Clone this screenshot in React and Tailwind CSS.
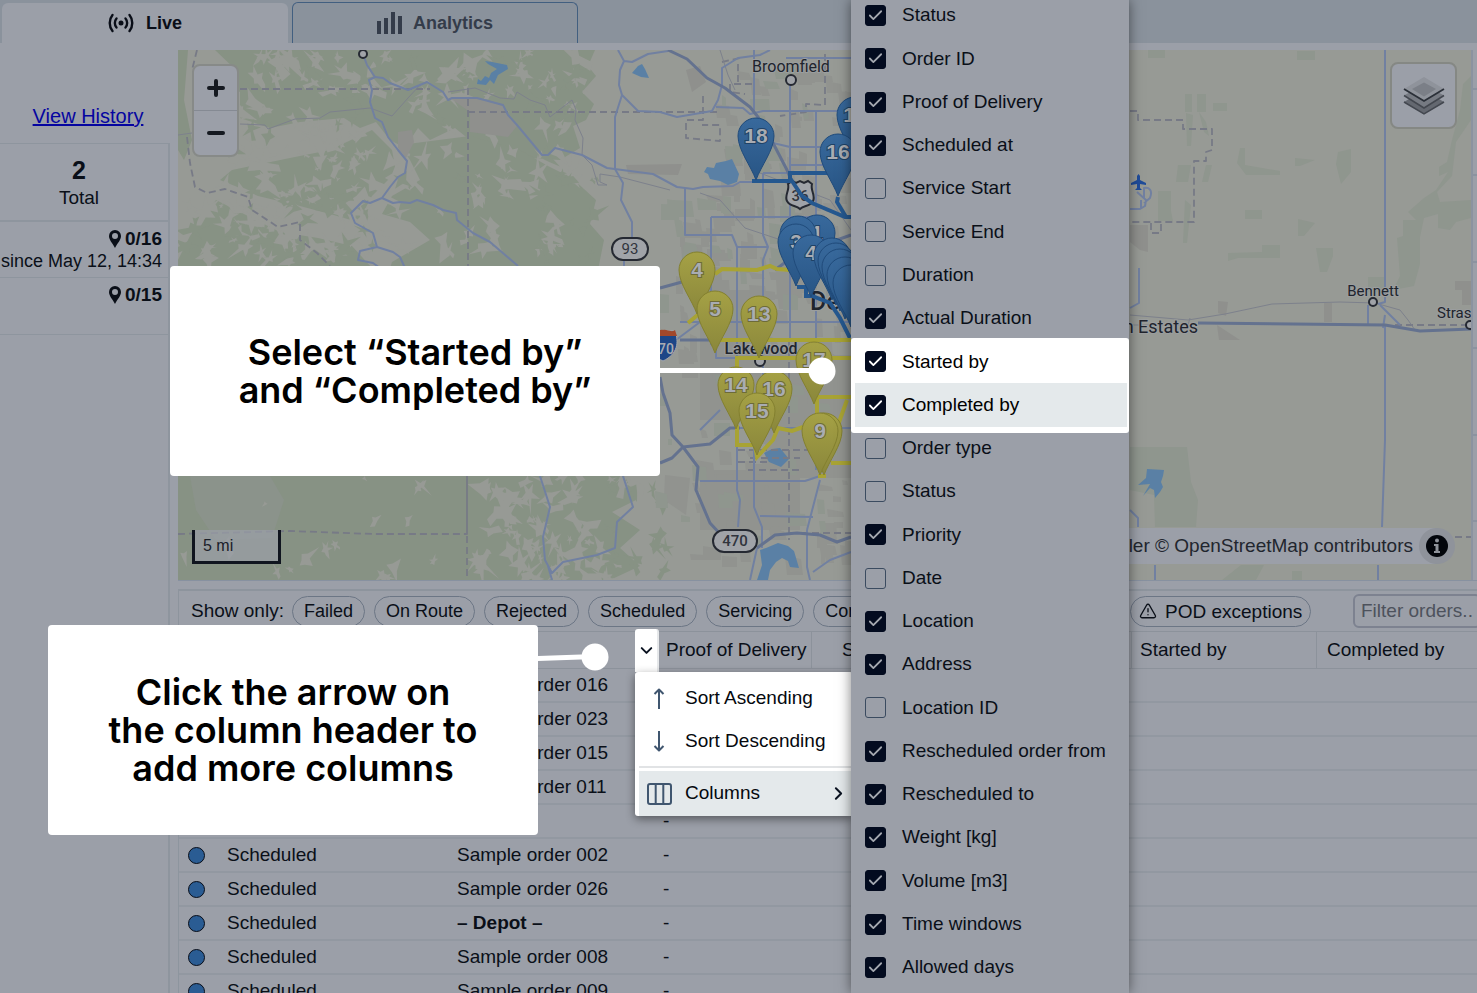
import React, { useState } from "react";
import { Check, ChevronDown, ChevronRight, TriangleAlert } from "lucide-react";

const COLUMN_OPTIONS = [
  { label: "Status", checked: true },
  { label: "Order ID", checked: true },
  { label: "Proof of Delivery", checked: true },
  { label: "Scheduled at", checked: true },
  { label: "Service Start", checked: false },
  { label: "Service End", checked: false },
  { label: "Duration", checked: false },
  { label: "Actual Duration", checked: true },
  { label: "Started by", checked: true, spotlight: true },
  { label: "Completed by", checked: true, spotlight: true, active: true },
  { label: "Order type", checked: false },
  { label: "Status", checked: false },
  { label: "Priority", checked: true },
  { label: "Date", checked: false },
  { label: "Location", checked: true },
  { label: "Address", checked: true },
  { label: "Location ID", checked: false },
  { label: "Rescheduled order from", checked: true },
  { label: "Rescheduled to", checked: true },
  { label: "Weight [kg]", checked: true },
  { label: "Volume [m3]", checked: true },
  { label: "Time windows", checked: true },
  { label: "Allowed days", checked: true },
];

const ORDERS = [
  "Sample order 016",
  "Sample order 023",
  "Sample order 015",
  "Sample order 011",
  "",
  "Sample order 002",
  "Sample order 026",
  "– Depot –",
  "Sample order 008",
  "Sample order 009",
];

const FILTERS = ["Failed", "On Route", "Rejected", "Scheduled", "Servicing", "Completed"];

const PINS = [
  { x: 697, y: 252, label: "4", color: "yellow" },
  { x: 715, y: 291, label: "5", color: "yellow" },
  { x: 759, y: 296, label: "13", color: "yellow" },
  { x: 814, y: 342, label: "17", color: "yellow" },
  { x: 736, y: 367, label: "14", color: "yellow" },
  { x: 774, y: 371, label: "16", color: "yellow" },
  { x: 757, y: 393, label: "15", color: "yellow" },
  { x: 824, y: 413, label: "", color: "yellow" },
  { x: 820, y: 413, label: "9", color: "yellow" },
  { x: 756, y: 118, label: "18", color: "blue" },
  { x: 855, y: 97, label: "17", color: "blue" },
  { x: 838, y: 134, label: "16", color: "blue" },
  { x: 817, y: 215, label: "1", color: "blue" },
  { x: 798, y: 216, label: "", color: "blue" },
  { x: 796, y: 224, label: "3", color: "blue" },
  { x: 811, y: 235, label: "4", color: "blue" },
  { x: 832, y: 238, label: "", color: "blue" },
  { x: 836, y: 243, label: "", color: "blue" },
  { x: 840, y: 249, label: "", color: "blue" },
  { x: 845, y: 257, label: "", color: "blue" },
  { x: 851, y: 265, label: "", color: "blue" },
];

// Small seeded generator so the terrain looks the same on every render
const seeded = (seed) => {
  let s = seed;
  return () => {
    s = (s * 16807) % 2147483647;
    return s / 2147483647;
  };
};

const shards = (seed, count, x, y, w, h, size) => {
  const rand = seeded(seed);
  let d = "";
  for (let i = 0; i < count; i++) {
    const cx = x + rand() * w;
    const cy = y + rand() * h;
    const r = size * (0.3 + rand() * 1.1);
    const points = 6 + Math.floor(rand() * 6);
    const tilt = rand() * Math.PI;
    for (let p = 0; p < points; p++) {
      const a = (p / points) * Math.PI * 2;
      // alternate long and short spokes for a jagged outline
      const rr = r * (p % 2 ? 0.2 + rand() * 0.4 : 0.7 + rand() * 0.8);
      const ex = Math.cos(a) * rr * 1.3;
      const ey = Math.sin(a) * rr * 0.8;
      const px = cx + ex * Math.cos(tilt) - ey * Math.sin(tilt);
      const py = cy + ex * Math.sin(tilt) + ey * Math.cos(tilt);
      d += `${p ? "L" : "M"}${px.toFixed(1)},${py.toFixed(1)}`;
    }
    d += "Z";
  }
  return d;
};

const blocks = (seed, count, x, y, w, h) => {
  const rand = seeded(seed);
  let d = "";
  for (let i = 0; i < count; i++) {
    const bx = x + rand() * w;
    const by = y + rand() * h;
    const bw = 4 + rand() * 16;
    const bh = 4 + rand() * 14;
    d += `M${bx.toFixed(0)},${by.toFixed(0)}l${bw.toFixed(0)},${(rand() * 3).toFixed(0)}l${(rand() * 3).toFixed(0)},${bh.toFixed(0)}h-${bw.toFixed(0)}Z`;
  }
  return d;
};

const Pin = ({ x, y, label, color }) => (
  <g transform={`translate(${x} ${y})`}>
    <path
      d="M0 62C-5 48-18 32-18 18A18 18 0 0 1 18 18C18 32 5 48 0 62Z"
      fill={color === "blue" ? "url(#pinBlue)" : "url(#pinYellow)"}
      stroke={color === "blue" ? "#204b7b" : "#83802f"}
      strokeWidth="1"
    />
    <text
      x="0"
      y="25"
      textAnchor="middle"
      fontSize="21"
      fontWeight="700"
      fontFamily="Liberation Sans, sans-serif"
      fill="#a9acb2"
      stroke={color === "blue" ? "#1f4266" : "#6d6b38"}
      strokeWidth="2"
      paintOrder="stroke"
    >
      {label}
    </text>
  </g>
);

const Place = ({ x, y, size = 16, anchor = "middle", weight = 400, children }) => (
  <text
    x={x}
    y={y}
    textAnchor={anchor}
    fontSize={size}
    fontWeight={weight}
    fontFamily="Roboto, sans-serif"
    fill="#20242d"
    stroke="#9b9e9f"
    strokeWidth="2"
    paintOrder="stroke"
  >
    {children}
  </text>
);

const Terrain = () => (
  <>
    <rect x="178" y="50" width="1600" height="600" fill="#979a95" />
    <g fill="#879284">
      <path d="M215 50H595L588 66L596 76L582 92L594 104L586 120L573 126L580 148L560 160L528 158L500 146L470 140L455 128L430 140L418 128L405 148L390 140L376 122L360 128L344 118L300 122L270 128L240 118V92L224 84L236 70Z" />
      <path d="M400 145L470 136L520 150L548 166L572 178L596 200L590 224L604 240L598 270L560 300H380L392 262L430 240L410 222L382 214L392 196L420 180L410 160Z" />
      <path d="M232 170L290 158L330 150L372 130L392 150L396 172L372 196L358 222L330 214L300 206L258 196L240 188L220 180Z" />
      <path d="M190 236L216 200L248 216L280 232L318 238L352 246L372 268L350 290H178V260Z" />
      <path d="M178 50L188 50L184 100L192 140L184 160L178 150Z" />
      <path d="M178 470H622L636 500L612 512L640 530L620 548L640 566L610 580H178Z" />
    </g>
    <path d="M190 476H270L284 500L272 538L216 540L196 510Z" fill="#8b938b" />
    <g fill="#979a95">
      <path d={shards(41, 80, 225, 52, 365, 85, 9)} />
      <path d={shards(97, 80, 230, 140, 350, 120, 9)} />
      <path d={shards(131, 44, 225, 130, 170, 85, 8)} />
      <path d={shards(23, 34, 190, 205, 180, 60, 9)} />
      <path d={shards(59, 18, 184, 476, 280, 104, 7)} />
      <path d={shards(67, 70, 475, 476, 160, 104, 9)} />
    </g>
    <g fill="#879284">
      <path d={shards(11, 26, 225, 60, 370, 120, 8)} />
      <path d={shards(13, 26, 185, 190, 190, 80, 8)} />
      <path d={shards(17, 18, 540, 170, 60, 95, 7)} />
      <path d={shards(19, 14, 610, 485, 60, 90, 8)} />
    </g>
    <g fill="#8f908d">
      <path d="M450 98H478L502 106L517 126L508 137L470 132V112Z" />
      <path d="M398 132L412 130L414 142L406 158L398 148Z" />
      <path d="M626 165L682 164L678 175L628 174Z" />
      <path d="M686 70L700 66L706 82L692 92Z" />
    </g>
    <g fill="#91938f">
      <path d="M700 290H760V420H700ZM765 355H852V478H765ZM665 475L690 478L686 515L664 500ZM700 470H800V530H700Z" />
      <path d={blocks(31, 110, 672, 190, 170, 180)} />
      <path d={blocks(71, 45, 715, 60, 130, 130)} />
      <path d={blocks(83, 50, 690, 380, 155, 190)} />
    </g>
    <g fill="#8f968e">
      <path d={blocks(37, 30, 650, 180, 190, 130)} />
      <path d={blocks(43, 22, 655, 360, 180, 200)} />
      <path d={blocks(53, 16, 720, 55, 120, 110)} />
      <path d="M1148 50H1165V58H1148ZM1297 51H1315V60H1297ZM1185 94H1192V112H1185ZM1197 94H1206V112H1197ZM1213 103H1227V111H1213ZM1186 113L1193 115L1191 146H1187ZM1199 112L1206 122L1209 136L1204 132ZM1178 165H1191L1188 182H1176ZM1206 165H1212L1208 182H1202ZM1158 191H1171V211L1173 221H1158ZM1185 200L1191 205L1187 243H1183ZM1240 148H1245V165L1280 171V175H1246L1237 163ZM1295 158L1315 160L1300 166H1295ZM1338 152L1351 149V172L1341 184L1336 164ZM1245 210H1262V219H1245ZM1298 219L1315 223L1304 236H1298ZM1228 253L1262 252V245H1280V258H1238L1228 261ZM1316 248H1333V256L1327 272H1320ZM1368 277H1384V292H1368Z" />
      <path d="M1471 76L1463 84L1460 110L1452 140L1447 162L1439 167V176L1448 172L1436 190L1424 198L1408 212L1416 220L1403 220V236L1397 238L1400 276L1393 290L1414 286L1420 264L1420 237L1424 218L1438 214L1438 228L1450 230L1456 222L1471 218V200L1440 202L1437 192L1452 176L1456 142L1471 120Z" />
      <path d="M1130 447H1187L1191 482L1198 500L1196 527H1155L1154 495L1130 490ZM1241 565H1264L1256 580H1222ZM1292 571H1302V580H1292Z" />
    </g>
    <g fill="#8f908d">
      <path d="M1130 225H1148V252L1140 250L1130 242ZM1218 301L1228 302L1226 316L1218 313ZM1455 281H1471V305H1462V290H1455ZM1324 303H1332V322H1324ZM1217 325L1240 340H1219Z" />
    </g>
    <g fill="#5a80a5">
      <path d="M485 61L492 62L507 65L508 69L498 75L494 84L490 80L486 85L477 84L478 79L481 81L485 76L489 78L491 73L497 69L488 64Z" />
      <path d="M638 66L642 64L645 69L649 78L641 77L632 73Z" />
      <path d="M704 172L707 167L714 168L716 163L726 161L732 159L739 174L737 182L728 185L720 181L710 179L708 174Z" />
      <path d="M764 453L772 449L780 448L789 459L781 467L769 462Z" />
      <path d="M760 550L766 548L778 543L788 546L794 551L799 568L790 567L788 561L782 558L776 562L770 570L768 580H757L762 565Z" />
      <path d="M1147 469L1164 470L1163 476L1161 482L1163 487L1160 492L1155 498L1154 490L1150 488L1143 496L1150 484L1138 485L1146 478Z" />
    </g>
  </>
);

const Roads = () => (
  <g fill="none" strokeLinejoin="round">
    <g stroke="#777a86" strokeWidth="1.800" strokeDasharray="7 4">
      <path d="M240 89H430M468 88V268M468 112H720M197 50L192 70M187 137L190 163L195 187L207 193L225 189L248 197L252 210L278 227L300 222V240L317 253L330 266" />
      <path d="M178 534L290 531L373 534H467V476V580" />
      <path d="M703 96V120H686V138L720 141V125H702M722 62L740 58M738 64V82M825 54V105L806 104V112L780 116M752 84H730V92L745 94" />
      <path d="M1130 111L1138 111V120L1183 120V129H1212V150L1206 152V161H1194V222H1130M1151 223V233H1161V223M1395 325H1471" />
      <path d="M789 340V540M738 450H820M750 458H800M748 470H800M738 462H770M790 533H851M1455 537H1471" />
    </g>
    <g stroke="#7d818c" strokeWidth="1">
      <path d="M178 135L192 133M240 124L265 125L268 129L295 119L320 118L330 112L370 108L392 116L408 98L420 85M448 92L475 88L500 98L514 99L517 92L530 100L545 105L550 117L572 100L576 110L575 120L583 138L582 155L592 165L598 185H607L600 182V174L620 177L670 190M700 193L720 200L745 228L790 243L830 250M1130 315L1188 320L1225 314L1272 304L1340 302L1375 303L1400 310L1408 320L1415 330M1130 325H1188L1190 318M720 50L728 75L735 90M760 173L830 200L851 230" />
    </g>
    <g stroke="#7180a1" strokeWidth="2">
      <path d="M363 54L367 65L375 77L369 80L372 90L370 102L375 118L382 122L388 137L398 150L407 161L405 173L398 177L390 187L382 198L370 203L363 201L351 213L355 223L373 233L377 247L360 251L358 260L373 263L380 268M377 247L393 252L400 257L405 268" />
      <path d="M375 77L383 78L390 83L408 90L427 82L443 92L448 100L452 98L477 98L503 105L508 115L517 125L542 155H548L555 148L582 155L607 168L653 174L677 187L693 189L703 187L733 186L740 182H763" />
      <path d="M382 198L393 203L400 202L410 203L417 200L433 205L443 210L456 213L457 220L473 233L490 242L518 266" />
      <path d="M618 50L624 61L620 70L619 85L622 95L615 117V169L623 183L621 200L632 222V240M624 258V275M624 61L632 62L648 54L668 51M622 95L638 111L660 112L677 117L712 111L718 100L722 85V68L738 58L760 55L770 50" />
      <path d="M716 107L743 108L750 114L763 111H851M754 50V111M786 58H851M790 85V340M763 173V235L768 247L763 260V340M816 112V217M711 217V345M685 188V235H732L737 247H767M711 217H816M737 247V490L740 500L738 527M773 143L790 147H820M763 173H790M680 322H851M716 340V358H740M763 365V395M660 352L700 322M754 447V507L762 527V548M700 481H805L820 476M760 516L813 517M807 530V567L810 580M820 480L807 530M757 548L750 580M813 572L830 560L851 552M737 428H780L851 428M816 300V470M700 430L720 410M790 165H850" />
      <path d="M540 476L550 507L543 537L545 560L552 573L563 562L597 555L615 548L617 522L633 507L623 476M552 580L548 566" />
      <path d="M1385 50V302L1378 304M1385 325V440L1382 527M1378 565V580M1368 305V324M1380 305L1400 325M1385 315L1383 328M1155 565V580M1130 510L1138 518V527M1139 268V303L1130 308" />
      <path d="M1130 209H1140L1145 206L1146 200L1137 192M1141 208V200M1144 203L1150 198C1153 190 1149 187 1144 188V198" />
    </g>
    <g stroke="#64728f" strokeWidth="3">
      <path d="M668 50L687 59L707 78L725 88L750 107L758 117L773 143L787 170L795 190" />
      <path d="M660 377L663 393L670 413L672 435L683 447L698 467L696 490L710 523L722 536M660 463L672 458L683 447L710 444L730 428L740 428M660 288L682 282M757 548L775 535L797 533L820 535L837 542L851 537M680 340H715M775 270L795 255L851 235" />
      <path d="M1198 323L1385 325L1420 331L1471 329" />
    </g>
  </g>
);

const Routes = () => (
  <g fill="none" strokeLinejoin="miter">
    <g stroke="#25588f" strokeWidth="4">
      <path d="M752 181H790V173H835M790 178L802 196L812 203L845 217H853M838 197L837 202L846 217" />
      <path d="M797 287H806V296H812L830 303L840 318L850 338" />
    </g>
    <g stroke="#a8a334" strokeWidth="4">
      <path d="M715 274L722 269L757 270L770 266L777 269L790 270M688 323L700 313M715 340H851M737 370V358H851M737 425V445H755L757 457L773 440L778 428L792 431L803 427M851 397H817V415M847 400L838 425M831 463H851M818 476H826" />
    </g>
  </g>
);

const MapCanvas = () => (
  <svg
    className="absolute inset-0 h-full w-full"
    viewBox="178 50 1293 530"
    preserveAspectRatio="xMinYMin slice"
    aria-hidden="true"
  >
    <defs>
      <linearGradient id="pinBlue" x1="0" y1="0" x2="0" y2="1">
        <stop offset="0" stopColor="#38699c" />
        <stop offset="1" stopColor="#285585" />
      </linearGradient>
      <linearGradient id="pinYellow" x1="0" y1="0" x2="0" y2="1">
        <stop offset="0" stopColor="#a5a145" />
        <stop offset="1" stopColor="#8a873b" />
      </linearGradient>
    </defs>
    <Terrain />
    <Roads />

    <g fill="#a0a3a8" stroke="#252932" strokeWidth="2">
      <circle cx="363" cy="54" r="4" />
      <circle cx="791" cy="80" r="5" />
      <circle cx="1373" cy="302" r="4" />
      <circle cx="1470" cy="325" r="4" />
      <circle cx="760" cy="361" r="5" />
      <rect x="612" y="238" width="36" height="22" rx="11" />
      <rect x="713" y="530" width="44" height="22" rx="11" />
      <path d="M788 184L792 181L796 183L800 181L804 183L808 181L812 184C810 190 816 196 813 201C810 207 804 205 800 209C796 205 790 207 787 201C784 196 790 190 788 184Z" />
    </g>
    <g fontFamily="Roboto, sans-serif" fontSize="15" fill="#30343d" textAnchor="middle">
      <text x="630" y="254">93</text>
      <text x="735" y="546" fontWeight="500">470</text>
      <text x="800" y="201" fontWeight="500">36</text>
    </g>
    <path d="M651 331H675C679 342 678 354 663 361C648 354 647 342 651 331Z" fill="#1d4687" stroke="#a4a7ad" strokeWidth="1" />
    <path d="M651 331C656 333 660 329 663 330C667 329 671 333 675 330L677 336H649Z" fill="#a2482b" />
    <text x="666" y="354" fontFamily="Roboto, sans-serif" fontSize="14" fontWeight="500" fill="#a9acb2" textAnchor="middle">70</text>

    <Place x="791" y="72">Broomfield</Place>
    <Place x="761" y="354" weight={500}>Lakewood</Place>
    <Place x="1373" y="296" size={15}>Bennett</Place>
    <Place x="1437" y="318" size={15} anchor="start">Strasburg</Place>
    <Place x="1198" y="333" size={18} anchor="end">Dennison Estates</Place>
    <Place x="810" y="310" size={25} anchor="start" weight={500}>Denver</Place>
    <path d="M1138.500 174L1140 176V180L1146 183V185L1140 184V188L1142 190H1135L1137 188V184L1131 185V183L1137 180V176Z" fill="#1f4c9a" />

    <Routes />
    {PINS.map((pin) => (
      <Pin key={`${pin.x}-${pin.y}`} {...pin} />
    ))}
  </svg>
);

const LiveIcon = () => (
  <svg width="26" height="20" viewBox="0 0 26 20" fill="none" stroke="currentColor" strokeWidth="2.400" strokeLinecap="round">
    <path d="M4.500 2C0.800 6.500 0.800 13.500 4.500 18M21.500 2C25.200 6.500 25.200 13.500 21.500 18M8.500 5.500C6.300 8 6.300 12 8.500 14.500M17.500 5.500C19.700 8 19.700 12 17.500 14.500" />
    <circle cx="13" cy="10" r="2.500" fill="currentColor" stroke="none" />
  </svg>
);

const BarsIcon = () => (
  <svg width="26" height="22" viewBox="0 0 26 22" fill="currentColor">
    <rect x="0" y="9" width="4" height="13" />
    <rect x="7" y="6" width="4" height="16" />
    <rect x="14" y="0" width="4" height="22" />
    <rect x="21" y="4" width="4" height="18" />
  </svg>
);

const StopIcon = () => (
  <svg width="12" height="18" viewBox="0 0 12 18" fill="currentColor">
    <path fillRule="evenodd" d="M6 0A6 6 0 0 1 12 6C12 10 8.500 13 6 18C3.500 13 0 10 0 6A6 6 0 0 1 6 0ZM6 3A3 3 0 1 0 6 9A3 3 0 1 0 6 3Z" />
  </svg>
);

const LayersIcon = () => (
  <svg width="42" height="40" viewBox="0 0 42 40">
    <path d="M1 26L21 14L41 26L21 38Z" fill="#646870" />
    <path d="M1 26L21 38L41 26" fill="none" stroke="#43474f" strokeWidth="1.500" />
    <path d="M1 19.500L21 8L41 19.500L21 32Z" fill="#767a82" />
    <path d="M1 19.500L21 32L41 19.500" fill="none" stroke="#43474f" strokeWidth="1.500" />
    <path d="M1 13L21 1L41 13L21 25Z" fill="#8f939b" />
    <path d="M9 13L21 6.500L33 13L21 20.500Z" fill="#7b7f87" />
    <path d="M1 13L21 25L41 13" fill="none" stroke="#2b3038" strokeWidth="1.800" />
  </svg>
);

const SortArrow = ({ down = false }) => (
  <svg
    width="12"
    height="21"
    viewBox="0 0 12 21"
    fill="none"
    stroke="#40566f"
    strokeWidth="2"
    strokeLinejoin="round"
    className={down ? "rotate-180" : ""}
  >
    <path d="M6 21V1.500M1.500 6L6 1.500L10.500 6" />
  </svg>
);

const ColumnsIcon = () => (
  <svg width="25" height="22" viewBox="0 0 25 22" fill="none" stroke="#40566f" strokeWidth="2">
    <rect x="1" y="1" width="23" height="20" rx="2" />
    <path d="M8.700 1V21M16.300 1V21" />
  </svg>
);

const Header = () => (
  <header className="flex h-[43px] shrink-0 items-end gap-1 bg-[#8a929c] pl-0.5">
    <button className="flex h-10 w-[286px] items-center justify-center gap-3 rounded-t-md bg-[#9b9fa8] text-[18px] font-bold text-[#0a0e18]">
      <LiveIcon />
      Live
    </button>
    <button className="flex h-[41px] w-[286px] items-center justify-center gap-2.5 rounded-t-md border border-b-0 border-[#425f80] text-[18px] font-bold text-[#343c4a]">
      <BarsIcon />
      Analytics
    </button>
  </header>
);

const Sidebar = () => (
  <aside className="w-[170px] shrink-0 overflow-hidden">
    <div className="flex h-[100px] items-end justify-center pb-3 pl-1.5">
      <a href="#history" className="text-[20px] text-[#0505a0] underline">
        View History
      </a>
    </div>
    <div className="h-full border-t border-r-2 border-[#8e959e]">
      <div className="flex h-[78px] flex-col items-center justify-center border-b-2 border-[#8e959e] pt-1 pr-2.5">
        <span className="text-[25px] leading-7 font-bold">2</span>
        <span className="text-[19px] leading-7">Total</span>
      </div>
      <div className="flex h-14 flex-col items-end border-b border-[#8e959e] pt-1.5 pr-1.5">
        <div className="flex items-center gap-1 text-[19px] leading-[22px] font-bold">
          <StopIcon />
          0/16
        </div>
        <div className="text-[18px] leading-[22px] whitespace-nowrap">since May 12, 14:34</div>
      </div>
      <div className="flex h-[57px] flex-col items-end border-b border-[#8e959e] pt-1.5 pr-1.5">
        <div className="flex items-center gap-1 text-[19px] leading-[22px] font-bold">
          <StopIcon />
          0/15
        </div>
      </div>
    </div>
  </aside>
);

const MapPanel = () => (
  <section className="flex h-[531px] border-b border-[#8791a0]">
    <div className="relative flex-1 overflow-hidden">
      <MapCanvas />

      <div className="absolute top-3.5 left-3.5 flex w-[47px] flex-col rounded-lg border-2 border-[#878a88] bg-[#9b9fa8]">
        <button aria-label="Zoom in" className="flex h-[45px] items-center justify-center border-b border-[#858a93]">
          <svg width="18" height="18" viewBox="0 0 18 18" stroke="#151920" strokeWidth="4" strokeLinecap="round">
            <path d="M2 9H16M9 2V16" />
          </svg>
        </button>
        <button aria-label="Zoom out" className="flex h-11 items-center justify-center">
          <svg width="18" height="18" viewBox="0 0 18 18" stroke="#151920" strokeWidth="4" strokeLinecap="round">
            <path d="M2 9H16" />
          </svg>
        </button>
      </div>

      <button
        aria-label="Layers"
        className="absolute top-3 right-3.5 flex h-[67px] w-[67px] items-center justify-center rounded-lg border-2 border-[#858884] bg-[#9b9fa8]"
      >
        <LayersIcon />
      </button>

      <div className="absolute bottom-4 left-3.5 flex h-[34px] w-[89px] items-center border-3 border-t-0 border-[#10151f] bg-[#9b9fa8]/70 pl-2 text-[16px] text-[#1b2029]">
        5 mi
      </div>

      <div className="absolute right-4 bottom-4 flex h-9 items-center gap-1.5">
        <div className="absolute inset-y-0 right-5 left-0 bg-[#9b9fa8]" />
        <span className="relative text-[19px] whitespace-nowrap text-[#22262e]">
          © MapTiler © OpenStreetMap contributors
        </span>
        <button aria-label="Attribution" className="relative flex h-9 w-9 items-center justify-center rounded-full bg-[#8f939b]">
          <svg width="22" height="22" viewBox="0 0 22 22">
            <circle cx="11" cy="11" r="11" fill="#03060c" />
            <circle cx="11" cy="5.500" r="2" fill="#8f939b" />
            <path d="M8 9H12.500V16H14V18H8V16H9.500V11H8Z" fill="#8f939b" />
          </svg>
        </button>
      </div>
    </div>
    <div className="flex w-1.5 flex-col border-l-2 border-[#8b93a0]">
      <div className="h-10 border-b-2 border-[#8b93a0]" />
      <div className="flex-1 border-b-2 border-[#8b93a0]" />
      <div className="flex-1 border-b-2 border-[#8b93a0]" />
      <div className="flex-1 border-b-2 border-[#8b93a0]" />
      <div className="flex-1 border-b-2 border-[#8b93a0]" />
      <div className="flex-1 border-b-2 border-[#8b93a0]" />
      <div className="h-[58px]" />
    </div>
  </section>
);

const FilterBar = () => (
  <div className="flex h-[42px] items-center overflow-hidden border-t-2 border-l border-[#8d949d] pl-3">
    <span className="mr-2 shrink-0 text-[19px]">Show only:</span>
    <div className="flex shrink-0 gap-[9px]">
      {FILTERS.map((name) => (
        <button key={name} className="h-[31px] rounded-full border border-[#6c7685] px-[11px] text-[18px] leading-none">
          {name}
        </button>
      ))}
    </div>
    <div className="ml-auto flex w-[347px] shrink-0 items-center justify-between">
      <button className="flex h-[31px] items-center gap-2 rounded-full border border-[#6c7685] px-2 text-[19px] leading-none">
        <TriangleAlert size={18} strokeWidth={1.800} />
        POD exceptions
      </button>
      <input
        aria-label="Filter orders"
        placeholder="Filter orders..."
        className="-mr-1 h-[34px] w-[128px] rounded-md border-2 border-[#7d8290] px-1.5 text-[19px] placeholder:text-[#4d525c]"
      />
    </div>
  </div>
);

const OrdersTable = () => (
  <table className="w-full table-fixed border-separate border-spacing-0 border-l border-[#8d959e] text-left text-[19px]">
    <colgroup>
      <col className="w-10" />
      <col className="w-[230px]" />
      <col className="w-[210px]" />
      <col className="w-[153px]" />
      <col className="w-[320px]" />
      <col className="w-[185px]" />
      <col />
    </colgroup>
    <thead>
      <tr className="h-[38px] [&>th]:border-y [&>th]:border-[#8c929b]">
        <th />
        <th className="p-0 pl-2 font-normal">Status</th>
        <th className="relative p-0 pl-2 font-normal">
          Order ID
          <button
            aria-label="Column menu"
            className="absolute -top-[3px] right-0 flex h-[43px] w-6 items-center justify-center rounded-t-[3px] border-r-2 border-[#e6e8ea] bg-white"
          >
            <ChevronDown size={19} strokeWidth={2.500} className="text-[#0a1220]" />
          </button>
        </th>
        <th className="border-r p-0 pl-[7px] font-normal whitespace-nowrap">Proof of Delivery</th>
        <th className="border-r p-0 pl-[30px] font-normal">Scheduled at</th>
        <th className="border-r p-0 pl-2 font-normal">Started by</th>
        <th className="p-0 pl-2.5 font-normal">Completed by</th>
      </tr>
    </thead>
    <tbody>
      {ORDERS.map((order, i) => (
        <tr key={i} className="h-[34px] [&>td]:border-b-2 [&>td]:border-[#9298a1]">
          <td className="p-0 pl-[9px]">
            <span className="block h-[17px] w-[17px] rounded-full border border-[#080d18] bg-[#2a5c93]" />
          </td>
          <td className="p-0 pl-2 leading-8">Scheduled</td>
          <td className={order.includes("Depot") ? "p-0 pl-2 leading-8 font-bold" : "p-0 pl-2 leading-8"}>{order}</td>
          <td className="p-0 pl-1 leading-8">-</td>
          <td />
          <td />
          <td />
        </tr>
      ))}
    </tbody>
  </table>
);

const SortMenu = () => (
  <div className="absolute top-[672px] left-[635px] flex w-[218px] flex-col rounded-[3px] bg-white pt-[5px] pl-1 text-[19px] text-[#05080e] shadow-[0_3px_10px_rgba(0,0,0,0.45)]">
    <button className="flex h-[43px] items-center">
      <span className="flex w-10 justify-center">
        <SortArrow />
      </span>
      <span className="pl-1.5">Sort Ascending</span>
    </button>
    <button className="flex h-[43px] items-center">
      <span className="flex w-10 justify-center">
        <SortArrow down />
      </span>
      <span className="pl-1.5">Sort Descending</span>
    </button>
    <div className="my-[3px] border-t-2 border-[#e1e3e5]" />
    <button className="flex h-[45px] items-center bg-[#e4e9eb]">
      <span className="flex w-10 justify-center">
        <ColumnsIcon />
      </span>
      <span className="pl-1.5">Columns</span>
      <ChevronRight size={21} strokeWidth={2.300} className="mr-1 ml-auto text-[#0a1220]" />
    </button>
  </div>
);

const ColumnsMenu = () => {
  const [options, setOptions] = useState(COLUMN_OPTIONS);

  const toggle = (index) => {
    setOptions(options.map((o, i) => (i === index ? { ...o, checked: !o.checked } : o)));
  };

  return (
    <div className="absolute inset-y-0 left-[851px] flex w-[278px] flex-col bg-[#9b9fa8] text-[19px] text-[#0a0f18] shadow-[0_0_12px_rgba(0,0,0,0.5)]">
      <div className="absolute top-[338px] h-[95px] w-full rounded-[3px] bg-white" />
      <ul className="relative -mt-1.5 mb-1 flex flex-1 flex-col pl-1">
        {options.map((option, i) => (
          <li key={i} className={option.active ? "mr-0.5 flex-1 bg-[#e4e9eb]" : "mr-0.5 flex-1"}>
            <label className={option.spotlight ? "flex h-full items-center pl-2.5 text-black" : "flex h-full items-center pl-2.5"}>
              <span className="relative flex h-[21px] w-[21px]">
                <input
                  type="checkbox"
                  checked={option.checked}
                  onChange={() => toggle(i)}
                  className="h-full w-full appearance-none rounded-[3px] border-[1.5px] border-[#3b4b60] checked:border-[#030b1f] checked:bg-[#030b1f]"
                />
                {option.checked && (
                  <Check
                    size={17}
                    strokeWidth={2.500}
                    className={option.spotlight ? "pointer-events-none absolute top-0.5 left-0.5 text-white" : "pointer-events-none absolute top-0.5 left-0.5 text-[#a4a8b0]"}
                  />
                )}
              </span>
              <span className="pl-4">{option.label}</span>
            </label>
          </li>
        ))}
      </ul>
    </div>
  );
};

const Callouts = () => (
  <>
    <div className="absolute top-[266px] left-[170px] flex h-[210px] w-[490px] items-center justify-center rounded bg-white text-center font-[Inter,sans-serif] text-[36px] leading-[38px] font-semibold text-black">
      <p>
        Select “Started by”
        <br />
        and “Completed by”
      </p>
    </div>
    <svg className="absolute top-[357px] left-[660px]" width="176" height="28" fill="#fff">
      <rect x="0" y="11" width="162" height="5" />
      <circle cx="162" cy="14" r="13.500" />
    </svg>
    <div className="absolute top-[625px] left-[48px] flex h-[210px] w-[490px] items-center justify-center rounded bg-white text-center font-[Inter,sans-serif] text-[36px] leading-[38px] font-semibold text-black">
      <p>
        Click the arrow on
        <br />
        the column header to
        <br />
        add more columns
      </p>
    </div>
    <svg className="absolute top-[643px] left-[538px]" width="72" height="28" fill="#fff">
      <path d="M0 13L57 11V16L0 18Z" />
      <circle cx="57" cy="14" r="13.500" />
    </svg>
  </>
);

const App = () => {
  return (
    <div className="relative flex h-screen flex-col overflow-hidden bg-[#9b9fa8] font-['Liberation_Sans',Arial,sans-serif] text-[#0a0f18]">
      <Header />
      <div className="flex min-h-0 flex-1">
        <Sidebar />
        <main className="min-w-0 flex-1 overflow-hidden pt-[7px] pl-2">
          <MapPanel />
          <div className="h-2" />
          <FilterBar />
          <OrdersTable />
        </main>
      </div>
      <SortMenu />
      <ColumnsMenu />
      <Callouts />
    </div>
  );
};

export default App;
